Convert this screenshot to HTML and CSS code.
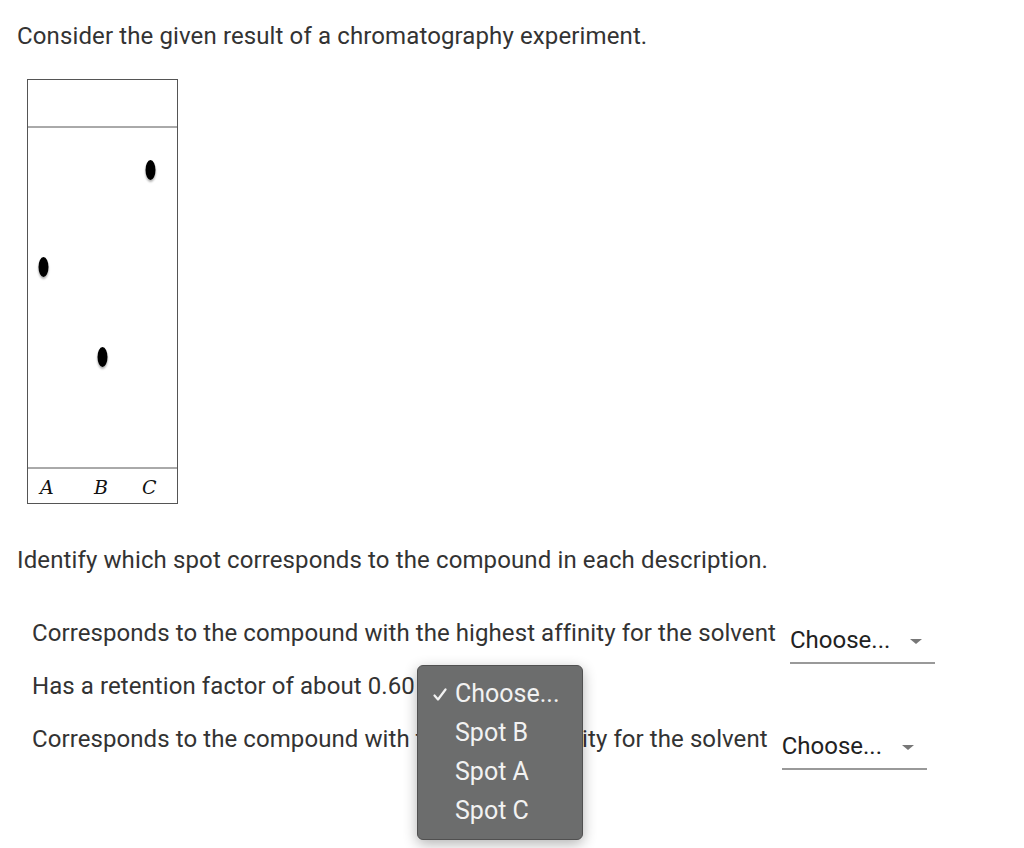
FILE: index.html
```html
<!DOCTYPE html>
<html lang="en">

<head>
    <meta charset="UTF-8">
    <title>Chromatography question</title>
    <link rel="stylesheet" href="styles.css">
</head>

<body>
    <div id="question">
        <p class="prompt">Consider the given result of a chromatography experiment.</p>

        <div class="plate">
            <svg width="152" height="426" viewBox="0 0 152 426">
                <defs>
                    <filter id="blur" x="-50%" y="-50%" width="200%" height="200%">
                        <feGaussianBlur in="SourceAlpha" stdDeviation="1.2"/>
                        <feOffset dx="0" dy="2" result="sh"/>
                        <feComponentTransfer><feFuncA type="linear" slope="0.35"/></feComponentTransfer>
                        <feMerge><feMergeNode/><feMergeNode in="SourceGraphic"/></feMerge>
                    </filter>
                </defs>
                <rect x="0.5" y="0.5" width="150" height="424" fill="#fff" stroke="#555" stroke-width="1"/>
                <line x1="0.5" y1="48" x2="150.5" y2="48" stroke="#555" stroke-width="1"/>
                <line x1="0.5" y1="389" x2="150.5" y2="389" stroke="#555" stroke-width="1"/>
                <ellipse cx="123.5" cy="91" rx="5" ry="10" fill="#000" filter="url(#blur)"/>
                <ellipse cx="16.5" cy="188" rx="5" ry="10" fill="#000" filter="url(#blur)"/>
                <ellipse cx="75.5" cy="278" rx="5" ry="10" fill="#000" filter="url(#blur)"/>
                <text x="13" y="415" class="lane">A</text>
                <text x="67" y="415" class="lane">B</text>
                <text x="115" y="415" class="lane">C</text>
            </svg>
        </div>

        <p class="prompt">Identify which spot corresponds to the compound in each description.</p>

        <ul class="rows">
            <li>Corresponds to the compound with the highest affinity for the solvent
                <span class="choose">Choose...<span class="caret"></span></span>
            </li>
            <li>Has a retention factor of about 0.60
                <span class="choose">Choose...<span class="caret"></span></span>
            </li>
            <li>Corresponds to the compound with the lowest affinity for the solvent
                <span class="choose">Choose...<span class="caret"></span></span>
            </li>
        </ul>

        <div class="menu">
            <div class="item">
                <svg class="tick" width="14" height="14" viewBox="0 0 14 14">
                    <path d="M1.5 7.5 L5 11.5 L12.5 1.5" fill="none" stroke="#f2f2f2" stroke-width="2.2" stroke-linecap="round" stroke-linejoin="round"/>
                </svg>Choose...
            </div>
            <div class="item">Spot B</div>
            <div class="item">Spot A</div>
            <div class="item">Spot C</div>
        </div>
    </div>
</body>

</html>
```

FILE: styles.css
```css
* {
    margin: 0;
    padding: 0;
}

body {
    font-family: Roboto, "Liberation Sans", sans-serif;
    color: #333;
    background: #fff;
}

#question {
    position: relative;
    padding: 22px 0 0 17px;
    height: 826px;
}

.prompt {
    font-size: 24px;
    line-height: 28px;
    letter-spacing: 0.12px;
}

.plate {
    margin: 29px 0 0 10px;
    height: 426px;
}

.plate svg {
    display: block;
}

.lane {
    font-family: "DejaVu Serif", serif;
    font-style: italic;
    font-size: 19px;
    fill: #111;
}

.plate + .prompt {
    margin-top: 41px;
}

.rows {
    list-style: none;
    margin: 45px 0 0 15px;
}

.rows li {
    font-size: 24px;
    line-height: 28px;
    letter-spacing: 0.08px;
    height: 53px;
    white-space: nowrap;
}

.choose {
    display: inline-block;
    position: relative;
    vertical-align: -7px;
    width: 145px;
    margin-left: 8px;
    padding: 0 0 8px 0;
    border-bottom: 2px solid #999;
    color: #222;
    font-size: 24px;
    line-height: 28px;
    letter-spacing: 0;
}

.caret {
    position: absolute;
    right: 13px;
    top: 13px;
    width: 0;
    height: 0;
    border-left: 6px solid transparent;
    border-right: 6px solid transparent;
    border-top: 5px solid #777;
}

.menu {
    position: absolute;
    left: 417px;
    top: 665px;
    width: 164px;
    padding: 8px 0 9px 0;
    background: #6c6d6d;
    border: 1px solid #505050;
    border-radius: 6px;
    box-shadow: 0 4px 14px rgba(0, 0, 0, 0.3);
    color: #f2f2f2;
    font-size: 25px;
}

.item {
    position: relative;
    line-height: 39px;
    padding-left: 37px;
}

.tick {
    position: absolute;
    left: 15px;
    top: 14px;
}
```
